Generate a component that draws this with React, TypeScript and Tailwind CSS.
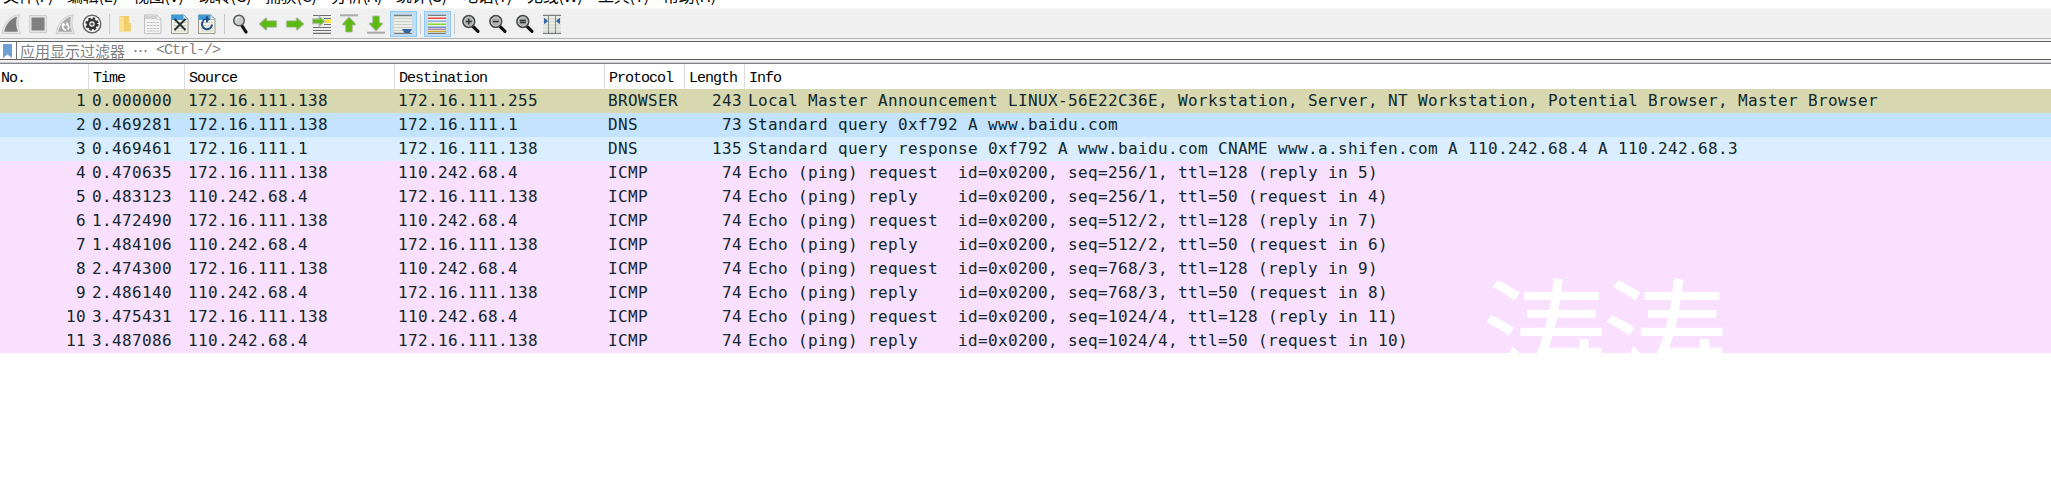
import type { ReactNode } from "react";

const menus = [
  { label: "文件(F)", width: "w-[64px]" },
  { label: "编辑(E)", width: "w-[66px]" },
  { label: "视图(V)", width: "w-[66px]" },
  { label: "跳转(G)", width: "w-[66px]" },
  { label: "捕获(C)", width: "w-[66px]" },
  { label: "分析(A)", width: "w-[65px]" },
  { label: "统计(S)", width: "w-[66px]" },
  { label: "电话(Y)", width: "w-[65px]" },
  { label: "无线(W)", width: "w-[71px]" },
  { label: "工具(T)", width: "w-[65px]" },
  { label: "帮助(H)", width: "w-[66px]" },
];

function Icon({ children, active = false }: { children: ReactNode; active?: boolean }) {
  return (
    <div
      className={
        active
          ? "flex h-[26px] w-[27px] shrink-0 items-center justify-center border border-[#90c8f6] bg-[#c0dcf3]"
          : "flex h-[26px] w-[27px] shrink-0 items-center justify-center"
      }
    >
      <svg width="20" height="20" viewBox="0 0 20 20" fill="none" className="shrink-0">
        {children}
      </svg>
    </div>
  );
}

function Separator() {
  return (
    <div className="flex w-[7px] shrink-0 justify-center">
      <div className="h-5 w-px bg-[#c8c8c8]" />
    </div>
  );
}

function Page({ muted = false }: { muted?: boolean }) {
  return (
    <>
      <path d="M1.500 1h12.500l4 4v14.500H1.500z" fill={muted ? "#f4f4f4" : "#f3f3e6"} stroke={muted ? "#c0c0c0" : "#9c9c90"} />
      {muted ? (
        <path d="M2 1.500h12V5H2z" fill="#d2d2d2" />
      ) : (
        <path d="M1.500 .8h12.300l4 4V6H1.500z" fill="#3c9bd8" />
      )}
      <path d="M13.500 1v4.500h4.300z" fill="#fff" stroke={muted ? "#c4c4c4" : "#a8b4b8"} strokeWidth=".7" />
      <path d="M4 8.500h12M4 11.500h12M4 14.500h12M4 17h12" stroke={muted ? "#bdbdbd" : "#c9c9bd"} strokeWidth="1.200" strokeDasharray="2.400 .8" />
    </>
  );
}

function Lens({ sign }: { sign: string }) {
  return (
    <>
      <path d="M12 12.500l5 4.800" stroke="#111" strokeWidth="3.200" strokeLinecap="round" />
      <circle cx="7.800" cy="7.500" r="5.900" fill="#aeb1b1" stroke="#4a4a4a" strokeWidth="1.600" />
      <circle cx="7.800" cy="7.500" r="4.500" stroke="#cfd1d1" strokeWidth=".8" />
      <path d={sign} stroke="#333" strokeWidth="1.500" />
    </>
  );
}

function Arrow({ shape, transform }: { shape: string; transform?: string }) {
  return (
    <g transform={transform} strokeLinejoin="round">
      <path d={shape} fill="#b9bfb4" stroke="#b9bfb4" strokeWidth="2.600" />
      <path d={shape} fill="#5cba12" stroke="#5cba12" strokeWidth=".8" />
    </g>
  );
}

const leftArrow = "M2.200 10L8 4.700V7.600H17.800v4.800H8v2.900z";
const upArrow = "M10 4l5.800 6.300h-3.200v7H7.400v-7H4.200z";

function Toolbar() {
  return (
    <div className="flex h-[29px] items-center bg-[#f0f0f0]">
      <div className="-ml-[2.5px] flex items-center">
        <Icon>
          <path d="M1 19.500C2.500 9 9 1.500 18.500 .7C16.500 7 16.500 13 19.500 19.500Z" fill="#e6e6e6" stroke="#cfcfcf" />
          <path d="M3.200 17.800C5 10 9.500 4.500 16 2.800C14.700 8 15 13 16.800 17.800Z" fill="#7c7c7c" />
        </Icon>
        <Icon>
          <path d="M1.500 1.500h17v17h-17z" fill="#e6e6e6" stroke="#cfcfcf" />
          <path d="M3.500 3.500h13v13h-13z" fill="#808080" />
        </Icon>
        <Icon>
          <path d="M1 19.500C2.500 9 9 1.500 18.500 .7C16.500 7 16.500 13 19.500 19.500Z" fill="#e6e6e6" stroke="#cfcfcf" />
          <path d="M3.200 17.800C5 10 9.500 4.500 16 2.800C14.700 8 15 13 16.800 17.800Z" fill="#a8a8a8" />
          <path d="M8.200 11a3.600 3.600 0 0 0 3 5.200M13 15.500a3.600 3.600 0 0 0-1.500-5.500" stroke="#fff" strokeWidth="1.800" />
          <path d="M6 11.500l2.500-3 2.500 3zM11 12l.5-4 2 1z" fill="#fff" />
        </Icon>
        <Icon>
          <circle cx="10" cy="10" r="8.800" fill="#fff" stroke="#666" strokeWidth="1.500" />
          <circle cx="10" cy="10" r="5.700" stroke="#333" strokeWidth="2" strokeDasharray="2.480 2" />
          <circle cx="10" cy="10" r="4" stroke="#333" strokeWidth="2.600" />
          <circle cx="10" cy="10" r="1.600" fill="#555" />
        </Icon>
        <Separator />
        <Icon>
          <path d="M3.500 2h9.500v7h1.800v8.500H3.500z" fill="#f3cd69" />
          <path d="M3.500 2l4.500 1.500v15l-4.500-1.500z" fill="#fbe090" />
        </Icon>
        <Icon><Page muted /></Icon>
        <Icon>
          <Page />
          <path d="M4.500 5l11 11M15.500 5l-11 11" stroke="#252f38" strokeWidth="2" />
        </Icon>
        <Icon>
          <Page />
          <path d="M5.800 7.500A5 5 0 1 0 15 10.500" stroke="#22508c" strokeWidth="2" />
          <path d="M10 2v6.500M9.500 5.300H7L5.500 8" stroke="#22508c" strokeWidth="1.600" />
          <path d="M9 2.500l4 3-4 3z" fill="#22508c" />
        </Icon>
        <Separator />
        <Icon>
          <path d="M10.500 11l4.500 7" stroke="#111" strokeWidth="3.200" strokeLinecap="round" />
          <circle cx="8" cy="6.500" r="5.300" fill="#c9cccc" stroke="#5a5a5a" strokeWidth="1.500" />
          <path d="M5 6.500a3.500 3.500 0 0 1 3.500-3" stroke="#fff" strokeWidth="1.200" />
        </Icon>
        <Icon><Arrow shape={leftArrow} /></Icon>
        <Icon><Arrow shape={leftArrow} transform="matrix(-1 0 0 1 20 0)" /></Icon>
        <Icon>
          <path d="M1 1.500h18M1 13.500h18M1 16.500h18M1 19.300h18" stroke="#6b6e6c" strokeWidth="1.200" />
          <path d="M12 4.500h7M12 10.500h7" stroke="#6b6e6c" />
          <path d="M13 5.500h6v3.500h-6z" fill="#ffe53a" />
          <path d="M.5 4.800h6.500V2l6 5.200L7 12.400V9.600H.5z" fill="#5cba12" stroke="#b9bfb4" strokeWidth="1.200" />
        </Icon>
        <Icon>
          <path d="M1 1.300h18" stroke="#a9aca9" strokeWidth="2" />
          <Arrow shape={upArrow} />
        </Icon>
        <Icon>
          <path d="M1 18.700h18" stroke="#a9aca9" strokeWidth="2" />
          <Arrow shape={upArrow} transform="matrix(1 0 0 -1 0 20)" />
        </Icon>
        <Icon active>
          <path d="M1 1h18v18H1z" fill="#eceee8" />
          <path d="M1 1.500h18M1 19.300h18" stroke="#777b7a" strokeWidth="1.300" />
          <path d="M1 4.500h18M1 7.500h18M1 10.500h18M1 13.500h18M1 16.500h18" stroke="#cbcec8" />
          <path d="M9 15h10l-2.500 4h-5z" fill="#3465a4" />
        </Icon>
        <Separator />
        <Icon active>
          <path d="M1 1h18v18H1z" fill="#eef0ec" />
          <path d="M1 1.300h18M1 19.300h18" stroke="#777b7a" strokeWidth="1.300" />
          <path d="M1 4.200h18" stroke="#ef2929" strokeWidth="1.300" />
          <path d="M1 7.200h18" stroke="#7aa5dc" strokeWidth="1.300" />
          <path d="M1 10.200h18" stroke="#73d216" strokeWidth="1.300" />
          <path d="M1 13.200h18" stroke="#5e82c0" strokeWidth="1.300" />
          <path d="M1 15.200h18" stroke="#a679ad" strokeWidth="1.300" />
          <path d="M1 17.400h18" stroke="#d0a72a" strokeWidth="1.300" />
        </Icon>
        <Separator />
        <Icon><Lens sign="M4.800 7.500h6M7.800 4.500v6" /></Icon>
        <Icon><Lens sign="M4.800 7.500h6" /></Icon>
        <Icon><Lens sign="M4.800 6.500h6M4.800 8.500h6" /></Icon>
        <Icon>
          <path d="M1 1h18v18H1z" fill="#eceee8" />
          <path d="M1 1.300h18M1 19.300h18" stroke="#777b7a" strokeWidth="1.200" />
          <path d="M1 5h18M1 8h18M1 11h18M1 14h18M1 17h18" stroke="#cfd1ca" />
          <path d="M6.500 1v18M13.500 1v18" stroke="#85898a" />
          <path d="M2.500 4.500L5.500 7l-3 2.500zM17.500 4.500L14.500 7l3 2.500z" fill="#3465a4" stroke="#3465a4" />
        </Icon>
      </div>
    </div>
  );
}

const latin = "font-['Liberation_Mono','Noto_Sans_CJK_SC',monospace] text-[15px] tracking-[-1px]";

function FilterBar() {
  return (
    <div className="flex h-[19px] items-center border-y border-[#606060] bg-white">
      <div className="flex h-full w-[17px] items-center border-r border-[#707070] pl-[3px]">
        <svg width="9" height="14" viewBox="0 0 9 14">
          <path d="M0 0h9v14L4.500 10.500 0 14z" fill="#6f9fd4" />
        </svg>
      </div>
      <div className="flex items-center whitespace-pre pl-[3px] leading-[17px] text-[#808080]">
        <span className="font-['Noto_Sans_CJK_SC',sans-serif] text-[15px]">应用显示过滤器</span>
        <span className="w-[31px] text-center font-['Noto_Sans_CJK_SC',sans-serif] text-[15px]">⋯</span>
        <span className={latin}>&lt;Ctrl-/&gt;</span>
      </div>
    </div>
  );
}

const columns = "grid grid-cols-[89px_96px_210px_210px_80px_60px_1fr]";

const headers = ["No.", "Time", "Source", "Destination", "Protocol", "Length", "Info"];

const host = "172.16.111.138";
const remote = "110.242.68.4";

interface Packet {
  time: string;
  source: string;
  destination: string;
  protocol: string;
  length: number;
  info: string;
  tone: string;
}

const icmp = (time: string, request: boolean, info: string): Packet => ({
  time,
  source: request ? host : remote,
  destination: request ? remote : host,
  protocol: "ICMP",
  length: 74,
  info: `Echo (ping) ${request ? "request" : "reply  "}  id=0x0200, ${info}`,
  tone: "bg-[#fae0ff]",
});

const packets: Packet[] = [
  {
    time: "0.000000",
    source: host,
    destination: "172.16.111.255",
    protocol: "BROWSER",
    length: 243,
    info: "Local Master Announcement LINUX-56E22C36E, Workstation, Server, NT Workstation, Potential Browser, Master Browser",
    tone: "bg-[#d8d8b0]",
  },
  {
    time: "0.469281",
    source: host,
    destination: "172.16.111.1",
    protocol: "DNS",
    length: 73,
    info: "Standard query 0xf792 A www.baidu.com",
    tone: "bg-[#c4e3ff]",
  },
  {
    time: "0.469461",
    source: "172.16.111.1",
    destination: host,
    protocol: "DNS",
    length: 135,
    info: "Standard query response 0xf792 A www.baidu.com CNAME www.a.shifen.com A 110.242.68.4 A 110.242.68.3",
    tone: "bg-[#daeeff]",
  },
  icmp("0.470635", true, "seq=256/1, ttl=128 (reply in 5)"),
  icmp("0.483123", false, "seq=256/1, ttl=50 (request in 4)"),
  icmp("1.472490", true, "seq=512/2, ttl=128 (reply in 7)"),
  icmp("1.484106", false, "seq=512/2, ttl=50 (request in 6)"),
  icmp("2.474300", true, "seq=768/3, ttl=128 (reply in 9)"),
  icmp("2.486140", false, "seq=768/3, ttl=50 (request in 8)"),
  icmp("3.475431", true, "seq=1024/4, ttl=128 (reply in 11)"),
  icmp("3.487086", false, "seq=1024/4, ttl=50 (request in 10)"),
];

function PacketList() {
  return (
    <div>
      <div className={`${columns} h-[25px] bg-white leading-[29px] text-black ${latin}`}>
        {headers.map((name, i) => (
          <div
            key={name}
            className={
              i === 0
                ? "border-r border-[#dcdcdc] pl-[1px]"
                : i === 6
                  ? "pl-[4px]"
                  : "border-r border-[#dcdcdc] pl-[4px]"
            }
          >
            {name}
          </div>
        ))}
      </div>
      <div className="relative overflow-hidden font-['DejaVu_Sans_Mono',monospace] text-[16px] tracking-[0.367px] text-[#12272e]">
        {packets.map((p, i) => (
          <div key={p.time} className={`${columns} h-6 whitespace-pre leading-[23px] ${p.tone}`}>
            <div className="pr-[3px] text-right">{i + 1}</div>
            <div className="pl-[3px]">{p.time}</div>
            <div className="pl-[3px]">{p.source}</div>
            <div className="pl-[3px]">{p.destination}</div>
            <div className="pl-[3px]">{p.protocol}</div>
            <div className="pr-[3px] text-right">{p.length}</div>
            <div className="pl-[3px]">{p.info}</div>
          </div>
        ))}
        <div className="absolute left-[1481px] top-[181px] font-['Noto_Sans_CJK_SC',sans-serif] text-[126px] font-normal leading-[120px] tracking-[-5.600px] text-white">
          涛涛
        </div>
      </div>
    </div>
  );
}

export default function App() {
  return (
    <div className="h-[500px] w-[2051px] overflow-hidden bg-white">
      <div className="flex h-2 items-end overflow-hidden whitespace-nowrap bg-white pl-[3px] font-['Noto_Sans_CJK_SC',sans-serif] text-[16px] leading-[16px] tracking-[-0.300px] text-black">
        {menus.map((m) => (
          <div key={m.label} className={`${m.width} shrink-0 pb-[5px]`}>
            {m.label}
          </div>
        ))}
      </div>
      <div className="h-px bg-[#f4f4f4]" />
      <Toolbar />
      <div className="h-px bg-[#b4b4b4]" />
      <div className="h-[2px] bg-[#f4f4f4]" />
      <FilterBar />
      <div className="h-[2px] bg-[#f0f0f0]" />
      <div className="h-[2px] border-b border-[#82828c] bg-[#d0d0d0]" />
      <PacketList />
    </div>
  );
}
